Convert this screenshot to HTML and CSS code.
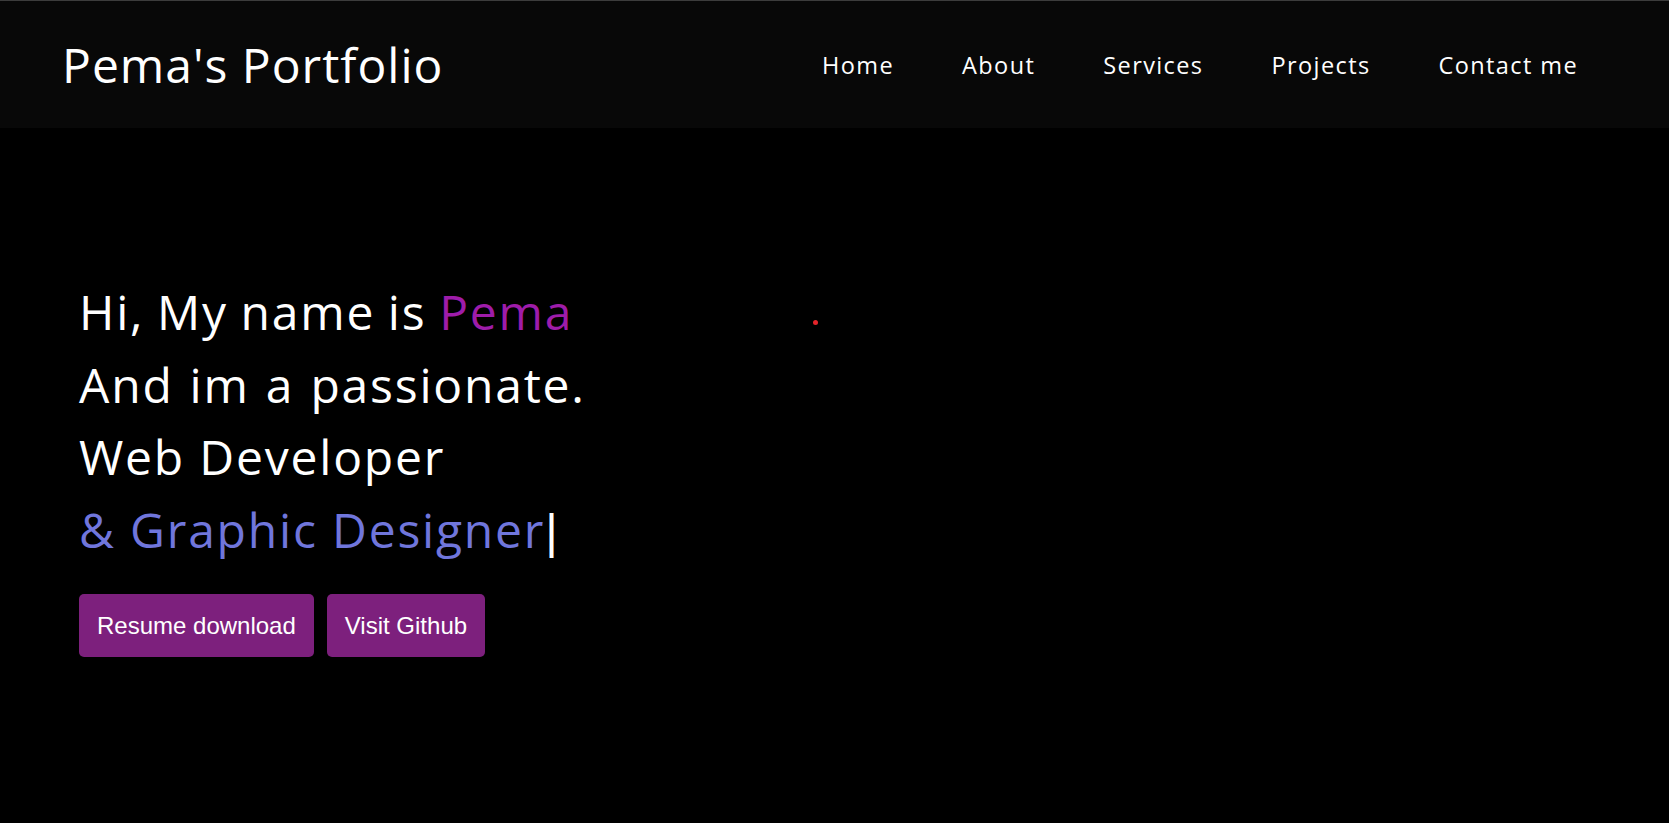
FILE: index.html
```html
<!DOCTYPE html>
<html lang="en">
<head>
<meta charset="utf-8">
<title>Pema's Portfolio</title>
<link rel="stylesheet" href="styles.css">
</head>
<body>
<header class="topbar">
  <div class="logo">Pema's Portfolio</div>
  <nav class="nav">
    <a href="#">Home</a>
    <a href="#">About</a>
    <a href="#">Services</a>
    <a href="#">Projects</a>
    <a href="#">Contact me</a>
  </nav>
</header>
<main class="hero">
  <span class="dot"></span>
  <div class="intro">
    <div class="line tight">Hi, My name is <span class="name">Pema</span></div>
    <div class="line loose">And im a passionate.</div>
    <div class="line">Web Developer</div>
    <div class="line role">&amp; Graphic Designer<span class="cursor">|</span></div>
  </div>
  <div class="actions">
    <a class="btn" href="#">Resume download</a>
    <a class="btn" href="#">Visit Github</a>
  </div>
</main>
</body>
</html>
```
FILE: styles.css
```css
html, body {
  margin: 0;
  padding: 0;
  background: #000;
  height: 100%;
}
body {
  font-family: "Open Sans", "DejaVu Sans", sans-serif;
  color: #fff;
  overflow: hidden;
}
.topbar {
  display: flex;
  align-items: center;
  justify-content: space-between;
  height: 127px;
  background: #080808;
  border-top: 1px solid #3c3c3c;
  padding: 0 91px 0 62px;
}
.logo {
  font-size: 48px;
  letter-spacing: 1px;
  line-height: 1;
  color: #fff;
}
.nav {
  display: flex;
  gap: 68px;
}
.nav a {
  color: #fff;
  text-decoration: none;
  font-size: 23.5px;
  letter-spacing: 1.4px;
}
.hero {
  position: relative;
  padding: 148px 0 0 79px;
}
.dot {
  position: absolute;
  left: 813px;
  top: 192px;
  width: 5px;
  height: 5px;
  border-radius: 50%;
  background: #e5242a;
}
.intro {
  font-size: 48px;
  line-height: 72.5px;
  letter-spacing: 1.8px;
}
.line {
  height: 72.5px;
}
.tight {
  word-spacing: -1.6px;
}
.loose {
  word-spacing: 1.8px;
}
.name {
  color: #9e1caa;
}
.role {
  color: #7076dc;
}
.cursor {
  color: #fff;
  letter-spacing: 0;
  line-height: 1;
  font-family: "Liberation Sans", Arial, sans-serif;
}
.actions {
  display: flex;
  gap: 13px;
  margin-top: 28px;
}
.btn {
  font-family: "Liberation Sans", Arial, sans-serif;
  font-size: 24px;
  letter-spacing: 0;
  color: #fff;
  text-decoration: none;
  background: #7d207d;
  border-radius: 5px;
  padding: 18px 18px;
  line-height: 27px;
}
```
